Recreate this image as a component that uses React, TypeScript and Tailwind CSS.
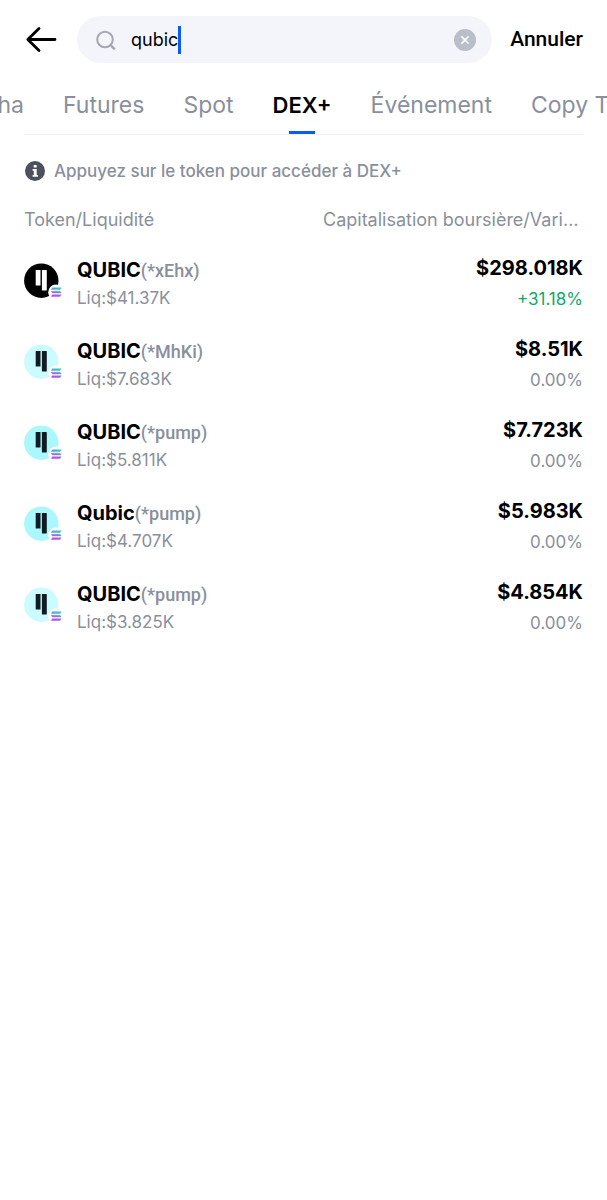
import { useState } from 'react'

interface Token {
  id: number
  symbol: string
  suffix: string
  liquidity: string
  cap: string
  change: string
  tone: 'black' | 'pale' | 'cyan'
}

const TABS = ['Alpha', 'Futures', 'Spot', 'DEX+', 'Événement', 'Copy Trading']

const TOKENS: Token[] = [
  { id: 1, symbol: 'QUBIC', suffix: '(*xEhx)', liquidity: '$41.37K', cap: '$298.018K', change: '+31.18%', tone: 'black' },
  { id: 2, symbol: 'QUBIC', suffix: '(*MhKi)', liquidity: '$7.683K', cap: '$8.51K', change: '0.00%', tone: 'pale' },
  { id: 3, symbol: 'QUBIC', suffix: '(*pump)', liquidity: '$5.811K', cap: '$7.723K', change: '0.00%', tone: 'cyan' },
  { id: 4, symbol: 'Qubic', suffix: '(*pump)', liquidity: '$4.707K', cap: '$5.983K', change: '0.00%', tone: 'cyan' },
  { id: 5, symbol: 'QUBIC', suffix: '(*pump)', liquidity: '$3.825K', cap: '$4.854K', change: '0.00%', tone: 'pale' },
]

const TONES = {
  black: { bg: '#000000', bar: '#ffffff' },
  pale: { bg: '#ccfbff', bar: '#101c24' },
  cyan: { bg: '#aaf8fd', bar: '#101c24' },
}

function TokenLogo({ tone }: { tone: Token['tone'] }) {
  const { bg, bar } = TONES[tone]
  return (
    <svg width="41" height="37" viewBox="0 0 41 37" className="shrink-0" aria-hidden="true">
      <defs>
        <linearGradient id={`sol-${tone}`} x1="0.3" y1="1" x2="0.7" y2="0">
          <stop offset="0" stopColor="#c340ee" />
          <stop offset="0.5" stopColor="#7b7fdf" />
          <stop offset="1" stopColor="#2fcdb8" />
        </linearGradient>
      </defs>
      <circle cx="17.3" cy="17.7" r="17.2" fill={bg} />
      <rect x="11.7" y="7" width="4.8" height="15.6" rx="0.4" fill={bar} />
      <rect x="17.9" y="7" width="4.9" height="20.4" rx="0.4" fill={bar} />
      <circle cx="32" cy="29.2" r="7.8" fill="#fff" />
      <path
        d="M28.4 24.7h8.8l-1.1 1.8h-8.8zM27.3 28.2h8.8l1.1 1.8h-8.8zM28.4 31.7h8.8l-1.1 1.8h-8.8z"
        fill={`url(#sol-${tone})`}
        stroke={`url(#sol-${tone})`}
        strokeWidth="0.4"
        strokeLinejoin="round"
      />
    </svg>
  )
}

export default function App() {
  const [query, setQuery] = useState('qubic')
  const [active, setActive] = useState('DEX+')

  return (
    <div className="min-h-screen bg-white font-['Inter',sans-serif] text-black">
      <header className="flex items-center px-6 pt-4">
        <button type="button" aria-label="Retour" className="mr-5 shrink-0">
          <svg width="33" height="28" viewBox="0 0 33 28" fill="none" stroke="#000" strokeWidth="2.8" strokeLinecap="round" strokeLinejoin="round">
            <path d="M31 13.5H4M15 2.5L3.8 13.5L15 24.5" />
          </svg>
        </button>
        <label className="flex h-[47px] min-w-0 flex-1 items-center rounded-full bg-[#f4f5fa] pr-4 pl-4">
          <svg width="24" height="24" viewBox="0 0 24 24" fill="none" stroke="#a4a8b4" strokeWidth="2" className="mr-[14px] shrink-0" aria-hidden="true">
            <circle cx="12" cy="11.5" r="7.8" />
            <path d="M17.6 17.2l4.2 4.2" strokeWidth="2.4" />
          </svg>
          <input
            aria-label="Rechercher"
            value={query}
            onChange={(e) => setQuery(e.target.value)}
            className="field-sizing-content h-7 max-w-full min-w-0 bg-transparent text-lg caret-transparent outline-none"
          />
          <span className="h-7 w-[3px] bg-[#0b5cf5]" />
          <button type="button" aria-label="Effacer" onClick={() => setQuery('')} className="ml-auto shrink-0">
            <svg width="22" height="22" viewBox="0 0 22 22">
              <circle cx="11" cy="11" r="11" fill="#babec9" />
              <path d="M7.4 7.4l7.2 7.2M14.6 7.4l-7.2 7.2" stroke="#fff" strokeWidth="1.6" />
            </svg>
          </button>
        </label>
        <button type="button" className="ml-[18px] shrink-0 font-['Roboto',sans-serif] text-[21px] font-medium">
          Annuler
        </button>
      </header>

      <nav className="overflow-hidden">
        <div className="-ml-[38px] flex h-[71px] gap-[39px]">
          {TABS.map((tab) => (
            <button
              key={tab}
              type="button"
              onClick={() => setActive(tab)}
              className={`flex shrink-0 flex-col items-center justify-between pt-6 leading-9 ${
                tab === active ? 'text-[22px] font-semibold text-black' : 'text-[23px] text-[#8a8f9c]'
              }`}
            >
              {tab}
              {tab === active && <span className="h-[3px] w-[26px] bg-[#0b5cf5]" />}
            </button>
          ))}
        </div>
        <div className="mx-6 h-px bg-[#f0f1f4]" />
      </nav>

      <main className="px-6">
        <p className="flex items-center gap-2 pt-6 text-[17px] leading-6 font-medium text-[#8a8f9c]">
          <svg width="22" height="22" viewBox="0 0 22 22" className="shrink-0" aria-hidden="true">
            <circle cx="11" cy="11" r="10" fill="#4c5160" />
            <path d="M9.7 5h3v2.6h-3zM8.6 9h4.1v5.9h1.2v1.8H8.6v-1.8h1.2v-4.1H8.6z" fill="#fff" />
          </svg>
          Appuyez sur le token pour accéder à DEX+
        </p>

        <table className="mt-6 w-full table-fixed text-[#8a8f9c]">
          <thead>
            <tr className="text-lg leading-[26px]">
              <th className="text-left font-normal">Token/Liquidité</th>
              <th className="w-[260px] truncate text-left font-normal">Capitalisation boursière/Variation</th>
            </tr>
          </thead>
          <tbody>
            {TOKENS.map((token) => (
              <tr key={token.id} className="h-[81px]">
                <td className="pt-4">
                  <div className="flex items-center gap-3">
                    <TokenLogo tone={token.tone} />
                    <div className="pt-1">
                      <div className="text-xl leading-7 font-bold text-black">
                        {token.symbol}
                        <span className="font-['Roboto',sans-serif] text-lg leading-7 font-medium text-[#8a8f9c]">
                          {token.suffix}
                        </span>
                      </div>
                      <div className="text-[17px] leading-[26px]">Liq:{token.liquidity}</div>
                    </div>
                  </div>
                </td>
                <td className="pt-[18px] text-right">
                  <div className="text-xl leading-8 font-bold text-black">{token.cap}</div>
                  <div className={`text-[17px] leading-[30px] ${token.change.startsWith('+') ? 'text-[#12a866]' : ''}`}>
                    {token.change}
                  </div>
                </td>
              </tr>
            ))}
          </tbody>
        </table>
      </main>
    </div>
  )
}
